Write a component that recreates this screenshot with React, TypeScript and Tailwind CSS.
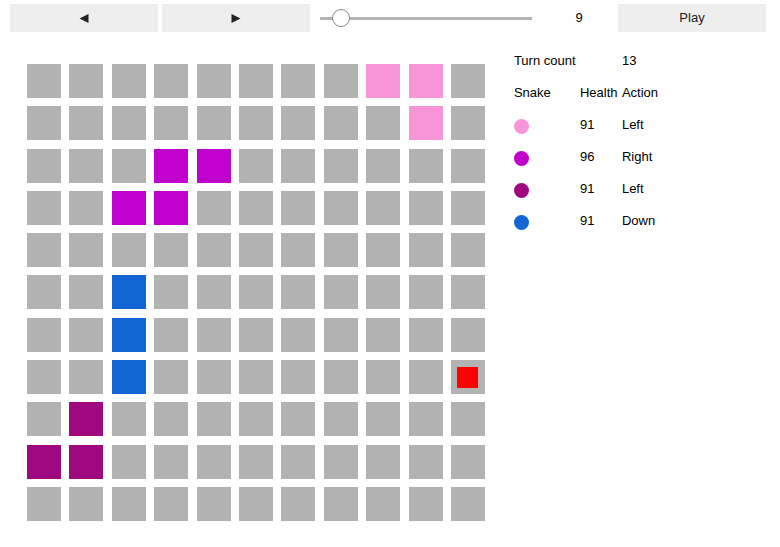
import React from "react";

const C: Record<string, string> = {
  p: "bg-[#f795d8]",
  m: "bg-[#c000cc]",
  u: "bg-[#a0087f]",
  b: "bg-[#1166d4]",
};

const board: string[] = [
  "........pp.",
  ".........p.",
  "...mm......",
  "..mm.......",
  "...........",
  "..b........",
  "..b........",
  "..b.......f",
  ".u.........",
  "uu.........",
  "...........",
];

const snakes = [
  { color: "bg-[#f795d8]", health: 91, action: "Left" },
  { color: "bg-[#c000cc]", health: 96, action: "Right" },
  { color: "bg-[#a0087f]", health: 91, action: "Left" },
  { color: "bg-[#1166d4]", health: 91, action: "Down" },
];

export default function App() {
  return (
    <div
      className="w-[780px] h-[547px] bg-white text-[13px] text-black"
      style={{ fontFamily: '"Liberation Sans", Arial, sans-serif' }}
    >
      <div className="flex items-center pl-[10px] pt-[4px] h-[32px]">
        <button className="w-[148px] h-[28px] bg-[#eeeeee] flex items-center justify-center">
          <svg width="10" height="9" viewBox="0 0 10 9">
            <path d="M0.5 4.5 L9.5 0 L9.5 9 Z" fill="#222" />
          </svg>
        </button>
        <button className="ml-[4px] w-[148px] h-[28px] bg-[#eeeeee] flex items-center justify-center">
          <svg width="10" height="9" viewBox="0 0 10 9">
            <path d="M9.5 4.5 L0.5 0 L0.5 9 Z" fill="#222" />
          </svg>
        </button>
        <div className="ml-[10px] w-[212px] h-[28px] relative flex items-center">
          <div className="w-full h-[3px] bg-[#b4b4b4]" />
          <div className="absolute left-[12px] top-[5px] w-[18px] h-[18px] rounded-full bg-white border border-[#8a8a8a]" />
        </div>
        <div className="w-[86px] text-center pl-[8px]">9</div>
        <button className="w-[148px] h-[28px] bg-[#eeeeee] flex items-center justify-center text-[13px] text-[#222]">
          Play
        </button>
      </div>

      <div className="flex pl-[27px] pt-[32px]">
        <div className="grid grid-cols-[repeat(11,34px)] gap-x-[8.4px] gap-y-[8.3px]">
          {board.map((row, r) =>
            row.split("").map((ch, c) => (
              <div
                key={`${r}-${c}`}
                className={`w-[34px] h-[34px] flex items-center justify-center ${
                  C[ch] ?? "bg-[#b2b2b2]"
                }`}
              >
                {ch === "f" && <div className="w-[21px] h-[21px] bg-[#ff0000]" />}
              </div>
            ))
          )}
        </div>

        <div className="ml-[29px] -mt-[19px] self-start grid grid-cols-[66px_42px_auto] auto-rows-[32px] items-center">
          <div>Turn count</div>
          <div />
          <div>13</div>
          <div>Snake</div>
          <div>Health</div>
          <div>Action</div>
          {snakes.map((s, i) => (
            <React.Fragment key={i}>
              <div className="flex items-center">
                <div className={`w-[15px] h-[15px] rounded-full mt-[3px] ${s.color}`} />
              </div>
              <div>{s.health}</div>
              <div>{s.action}</div>
            </React.Fragment>
          ))}
        </div>
      </div>
    </div>
  );
}
